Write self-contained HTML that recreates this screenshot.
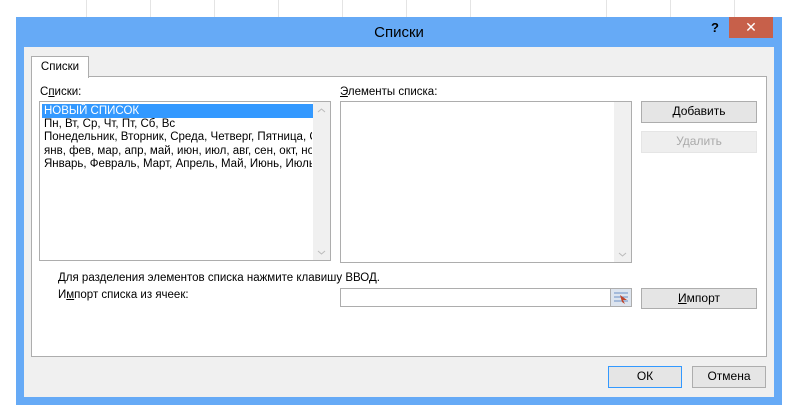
<!DOCTYPE html>
<html><head><meta charset="utf-8"><style>
*{box-sizing:border-box;margin:0;padding:0}
body{width:799px;height:419px;background:#fff;position:relative;overflow:hidden;font-family:"Liberation Sans","DejaVu Sans",sans-serif;font-size:11.5px;color:#000}
.a{position:absolute}
.grid{position:absolute;top:0;width:1px;height:17px;background:#e4e4e4}
.btn{position:absolute;background:#e5e5e5;border:1px solid #adadad;text-align:center;line-height:19px;font-size:12px}
u{text-decoration:underline}
.sb{position:absolute;right:0;top:0;width:17px;background:#f0f0f0}
</style></head><body>
<div class="grid" style="left:86px"></div><div class="grid" style="left:150px"></div><div class="grid" style="left:214px"></div><div class="grid" style="left:278px"></div><div class="grid" style="left:342px"></div><div class="grid" style="left:406px"></div><div class="grid" style="left:470px"></div><div class="grid" style="left:606px"></div><div class="grid" style="left:670px"></div><div class="grid" style="left:734px"></div>
<div class="a" style="left:16px;top:17px;width:766px;height:388px;background:#66aaf6"></div>
<div class="a" style="left:16px;top:17px;width:766px;height:31px;text-align:center;line-height:31px;font-size:15px;color:#000">Списки</div>
<div class="a" style="left:700px;top:17px;width:30px;height:21px;text-align:center;line-height:21px;font-weight:bold;font-size:13px">?</div>
<div class="a" style="left:729px;top:17px;width:44px;height:21px;background:#c7604a;color:#fff;text-align:center;line-height:21px;font-size:14px">✕</div>
<div class="a" style="left:24px;top:47px;width:750px;height:350px;background:#f0f0f0"></div>
<div class="a" style="left:31px;top:76px;width:736px;height:281px;background:#fff;border:1px solid #adadad"></div>
<div class="a" style="left:31px;top:56px;width:58px;height:22px;background:#fff;border:1px solid #adadad;border-bottom:none;text-align:center;line-height:21px;font-size:11.5px">Списки</div>
<div class="a" style="left:40px;top:86px">С<u>п</u>иски:</div>
<div class="a" style="left:340px;top:86px"><u>Э</u>лементы списка:</div>
<div class="a" style="left:39px;top:101px;width:292px;height:160px;border:1px solid #adadad;background:#fff;overflow:hidden;line-height:13.4px;font-size:11.5px;white-space:nowrap">
<div style="position:absolute;left:2px;top:2px;width:272px;height:14px;line-height:14px;background:#3399ff;color:#fff;padding-left:2px">НОВЫЙ СПИСОК</div>
<div style="position:absolute;left:4px;top:16px;width:268px;overflow:hidden">Пн, Вт, Ср, Чт, Пт, Сб, Вс<br>Понедельник, Вторник, Среда, Четверг, Пятница, Суббота<br>янв, фев, мар, апр, май, июн, июл, авг, сен, окт, ноя<br>Январь, Февраль, Март, Апрель, Май, Июнь, Июль,</div>
<div class="sb" style="height:158px"><svg width="17" height="158"><path d="M5 10 L8.5 7 L12 10" stroke="#bbb" fill="none"/><path d="M5 149 L8.5 152 L12 149" stroke="#bbb" fill="none"/></svg></div>
</div>
<div class="a" style="left:340px;top:101px;width:292px;height:162px;border:1px solid #adadad;background:#fff">
<div class="sb" style="height:160px"><svg width="17" height="160"><path d="M5 151 L8.5 154 L12 151" stroke="#bbb" fill="none"/></svg></div>
</div>
<div class="btn" style="left:641px;top:101px;width:116px;height:22px"><u>Д</u>обавить</div>
<div class="btn" style="left:641px;top:131px;width:116px;height:22px;border-color:#e5e5e5;background:#eee;color:#aaa">Удалить</div>
<div class="a" style="left:58px;top:272px">Для разделения элементов списка нажмите клавишу ВВОД.</div>
<div class="a" style="left:58px;top:289px">И<u>м</u>порт списка из ячеек:</div>
<div class="a" style="left:340px;top:288px;width:292px;height:19px;border:1px solid #adadad;background:#fff">
<div style="position:absolute;right:0;top:0;width:21px;height:17px;background:#dde4ee;border-left:1px solid #adadad">
<svg width="20" height="17"><g stroke="#6b8fc7"><line x1="3" y1="4" x2="17" y2="4"/><line x1="3" y1="8" x2="17" y2="8"/><line x1="3" y1="12" x2="17" y2="12"/></g><path d="M9 6 L16 11 L12 11 L14 15 L11 13 Z" fill="#c0452a"/></svg></div>
</div>
<div class="btn" style="left:641px;top:288px;width:116px;height:21px"><u>И</u>мпорт</div>
<div class="btn" style="left:608px;top:366px;width:74px;height:22px;border-color:#3399ff">ОК</div>
<div class="btn" style="left:692px;top:366px;width:74px;height:22px">Отмена</div>
</body></html>
